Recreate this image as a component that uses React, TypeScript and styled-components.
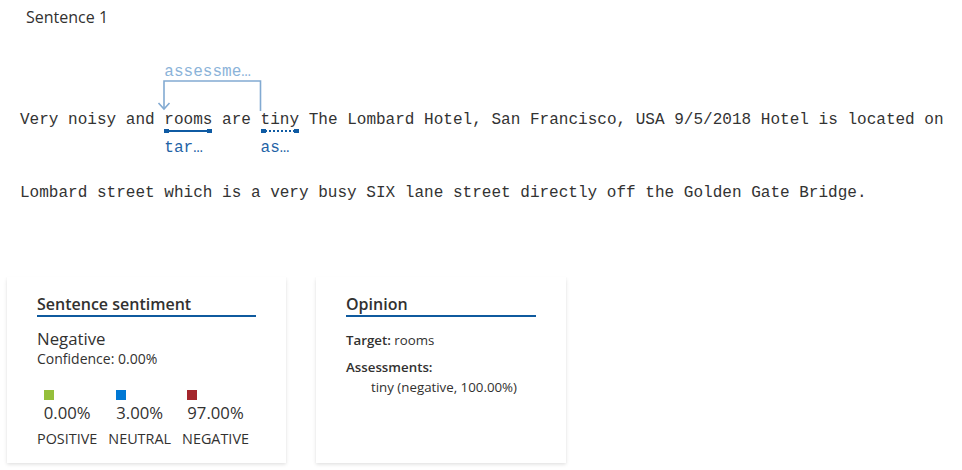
import React from "react";
import styled, { createGlobalStyle } from "styled-components";

const Global = createGlobalStyle`
  html, body { margin: 0; padding: 0; background: #ffffff; }
  body { font-family: "Open Sans", "Noto Sans", sans-serif; color: #323130; }
`;

const Page = styled.div`
  width: 962px;
  height: 470px;
  overflow: hidden;
  box-sizing: border-box;
`;

const Heading = styled.div`
  padding: 7px 0 0 26px;
  font-size: 16px;
  line-height: 20px;
  color: #323130;
`;

const Paragraph = styled.div`
  margin-top: 57px;
  padding: 0 0 0 20px;
  font-family: "Liberation Mono", monospace;
  font-size: 16.05px;
  line-height: 73px;
  color: #333333;
  width: 962px;
  box-sizing: border-box;
`;

const Word = styled.span`
  display: inline-block;
  position: relative;
  line-height: 18px;
`;

const Underline = styled.span<{ $dotted?: boolean }>`
  position: absolute;
  left: 0;
  right: 0;
  top: calc(100% + 1px);
  height: 0;
  border-top: 2px ${(p) => (p.$dotted ? "dotted" : "solid")} #0f5ba3;
  &::before,
  &::after {
    content: "";
    position: absolute;
    top: -3px;
    width: 5px;
    height: 4px;
    background: #0f5ba3;
  }
  &::before { left: 0; }
  &::after { right: 0; }
`;

const Label = styled.span<{ $light?: boolean }>`
  position: absolute;
  left: 0;
  white-space: nowrap;
  overflow: hidden;
  text-overflow: ellipsis;
  line-height: 18px;
  color: ${(p) => (p.$light ? "#8bb3d9" : "#1f63a6")};
`;

const BelowLabel = styled(Label)`
  top: calc(100% + 10px);
  width: calc(100% - 2px);
`;

const AboveLabel = styled(Label)`
  top: -48px;
  width: 93px;
`;

const Arc = styled.svg`
  position: absolute;
  left: -8px;
  top: -32px;
  overflow: visible;
`;

const Cards = styled.div`
  display: flex;
  gap: 30px;
  padding: 47px 0 0 7px;
`;

const Card = styled.div<{ $w: number }>`
  width: ${(p) => p.$w}px;
  height: 186px;
  box-sizing: border-box;
  padding: 16px 30px 0 30px;
  background: #fff;
  box-shadow: 0 1.6px 3.6px rgba(0, 0, 0, 0.13), 0 0.3px 0.9px rgba(0, 0, 0, 0.11);
`;

const CardTitle = styled.div`
  font-size: 16px;
  line-height: 22px;
  font-weight: 600;
  color: #323130;
  border-bottom: 2px solid #0f5a9e;
`;

const Big = styled.div`
  margin-top: 12px;
  font-size: 16.8px;
  line-height: 20px;
  color: #323130;
`;

const Small = styled.div`
  font-size: 14px;
  line-height: 20px;
  color: #323130;
`;

const Scores = styled.div`
  display: flex;
  gap: 11px;
  margin-top: 21px;
`;

const Score = styled.div`
  display: flex;
  flex-direction: column;
  align-items: center;
`;

const ScoreInner = styled.div`
  display: flex;
  flex-direction: column;
  align-items: flex-start;
`;

const Swatch = styled.span<{ $c: string }>`
  width: 10px;
  height: 10px;
  background: ${(p) => p.$c};
`;

const Pct = styled.div`
  font-size: 16.7px;
  line-height: 26px;
  color: #323130;
`;

const ScoreLabel = styled.div`
  margin-top: 4px;
  font-size: 14.4px;
  line-height: 18px;
  color: #323130;
  text-transform: uppercase;
`;

const Row = styled.div<{ $mt: number; $indent?: boolean }>`
  margin-top: ${(p) => p.$mt}px;
  padding-left: ${(p) => (p.$indent ? 25 : 0)}px;
  font-size: 13.3px;
  line-height: 18px;
  color: #323130;
`;

const Key = styled.span`
  font-weight: 600;
  color: #323130;
`;

const scores = [
  { c: "#95bf3b", v: "0.00%", l: "Positive" },
  { c: "#0078d4", v: "3.00%", l: "Neutral" },
  { c: "#a4262c", v: "97.00%", l: "Negative" },
];

export default function App() {
  return (
    <Page>
      <Global />
      <Heading>Sentence 1</Heading>
      <Paragraph>
        Very noisy and{" "}
        <Word>
          rooms
          <AboveLabel $light>assessment</AboveLabel>
          <Arc width="112" height="34" viewBox="0 0 112 34">
            <path
              d="M104.5 32 V2 H8 V30"
              fill="none"
              stroke="#82aad2"
              strokeWidth="1.6"
            />
            <polyline
              points="2.5,24 8,30 13.5,24"
              fill="none"
              stroke="#82aad2"
              strokeWidth="1.6"
            />
          </Arc>
          <Underline />
          <BelowLabel>target</BelowLabel>
        </Word>{" "}
        are{" "}
        <Word>
          tiny
          <Underline $dotted />
          <BelowLabel>assessment</BelowLabel>
        </Word>{" "}
        The Lombard Hotel, San Francisco, USA 9/5/2018 Hotel is located on Lombard
        street which is a very busy SIX lane street directly off the Golden Gate
        Bridge.
      </Paragraph>
      <Cards>
        <Card $w={279}>
          <CardTitle>Sentence sentiment</CardTitle>
          <Big>Negative</Big>
          <Small>Confidence: 0.00%</Small>
          <Scores>
            {scores.map((s) => (
              <Score key={s.l}>
                <ScoreInner>
                  <Swatch $c={s.c} />
                  <Pct>{s.v}</Pct>
                </ScoreInner>
                <ScoreLabel>{s.l}</ScoreLabel>
              </Score>
            ))}
          </Scores>
        </Card>
        <Card $w={250}>
          <CardTitle>Opinion</CardTitle>
          <Row $mt={14}>
            <Key>Target:</Key> rooms
          </Row>
          <Row $mt={9}>
            <Key>Assessments:</Key>
          </Row>
          <Row $mt={2} $indent>
            tiny (negative, 100.00%)
          </Row>
        </Card>
      </Cards>
    </Page>
  );
}
